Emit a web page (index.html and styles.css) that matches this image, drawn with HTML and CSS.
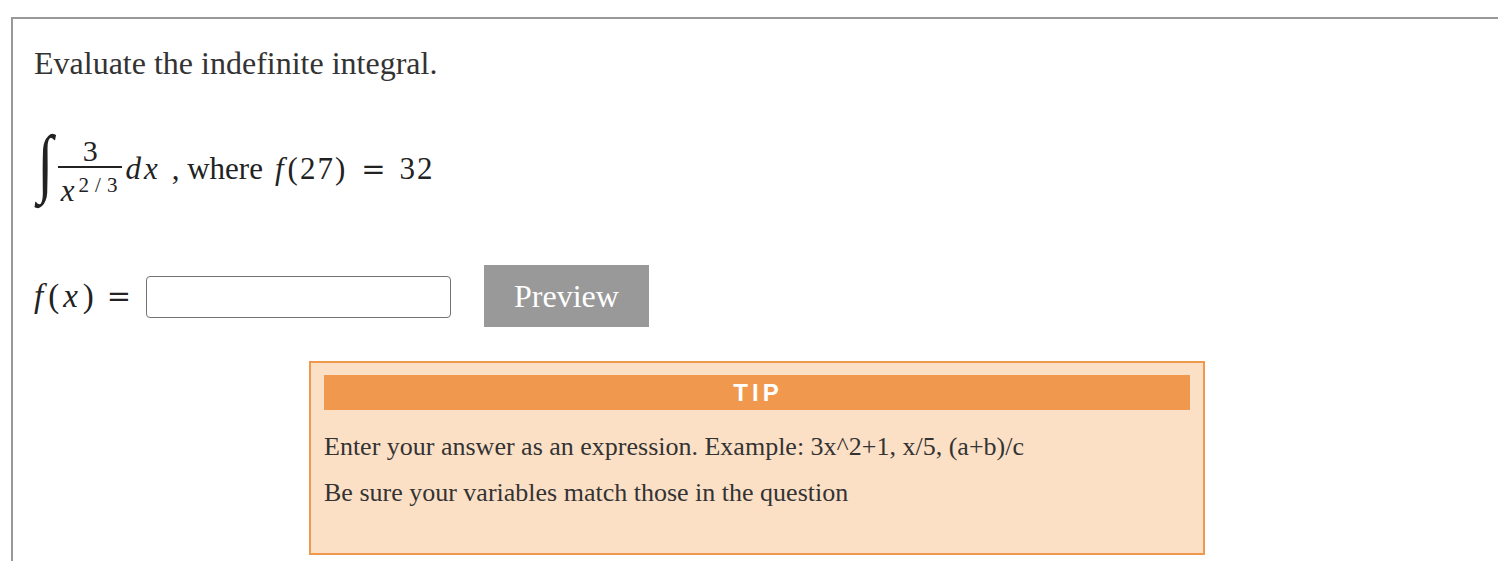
FILE: index.html
```html
<!DOCTYPE html>
<html>
<head>
<meta charset="utf-8">
<link rel="stylesheet" href="styles.css">
</head>
<body>
<div class="card">
  <p class="prompt">Evaluate the indefinite integral.</p>
  <div class="math-line">
    <span class="int">∫</span>
    <span class="frac">
      <span class="num">3</span>
      <span class="den"><i class="dvar">x</i><span class="sup">2<span class="sl">/</span>3</span></span>
    </span>
    <span class="mi dx">dx</span>
    <span class="txt">, where</span>
    <span class="mi f">f</span><span class="mn">(27)</span>
    <span class="mo">=</span>
    <span class="mn">32</span>
  </div>
  <div class="answer-row">
    <span class="lhs"><i class="mf">f</i><span class="mp">(</span><i class="mx">x</i><span class="mp">)</span><span class="mo eq">=</span></span>
    <input class="answer" type="text">
    <button class="preview">Preview</button>
  </div>
  <div class="tip">
    <div class="tip-head">TIP</div>
    <p class="tip-line first">Enter your answer as an expression. Example: 3x^2+1, x/5, (a+b)/c</p>
    <p class="tip-line">Be sure your variables match those in the question</p>
  </div>
</div>
</body>
</html>
```

FILE: styles.css
```css
html, body {
  margin: 0;
  padding: 0;
  background: #fff;
  overflow: hidden;
}
body {
  font-family: "Liberation Serif", "Times New Roman", serif;
  color: #333;
}
.card {
  margin: 17px 0 0 11px;
  border-top: 2px solid #999;
  border-left: 2px solid #999;
  padding: 26px 0 0 21px;
  height: 620px;
}
.prompt {
  margin: 0;
  font-size: 32px;
  line-height: 36px;
}
.math-line {
  display: flex;
  align-items: center;
  height: 72px;
  margin-top: 52px;
  font-size: 31px;
  color: #222;
}
.int {
  font-family: "Liberation Serif", serif;
  font-size: 76px;
  line-height: 72px;
  font-style: italic;
  transform: translateY(-7px) scaleX(0.75);
  margin-left: 1px;
}
.frac {
  display: inline-flex;
  flex-direction: column;
  align-items: center;
  margin: 0 3px 0 2px;
  transform: translateY(2px);
}
.num {
  font-size: 30px;
  line-height: 29px;
  padding: 0 5px 1px;
  border-bottom: 2px solid #222;
  align-self: stretch;
  text-align: center;
}
.den {
  font-size: 31px;
  line-height: 32px;
  padding: 1px 5px 0 3px;
}
.dvar {
  font-family: "Liberation Serif", serif;
  font-style: italic;
  margin-right: 2px;
}
.sup {
  font-size: 21px;
  vertical-align: 9px;
  margin-left: 2px;
}
.sl {
  margin: 0 6px;
}
.mi {
  font-family: "Liberation Serif", serif;
  font-style: italic;
  letter-spacing: 2px;
}
.mn {
  font-family: "Liberation Serif", serif;
  letter-spacing: 2px;
}
.f {
  margin-right: 2px;
}
.dx {
  letter-spacing: 3px;
  margin-right: 11px;
}
.txt {
  margin-right: 12px;
}
.mo {
  font-family: "DejaVu Serif", serif;
  font-size: 29px;
  margin: 0 14px 0 14px;
}
.answer-row {
  display: flex;
  align-items: center;
  margin-top: 60px;
  height: 62px;
}
.lhs {
  display: flex;
  align-items: center;
  font-size: 33px;
  width: 112px;
  color: #222;
}
.mf {
  font-family: "Liberation Serif", serif;
  margin-right: 5px;
}
.mx {
  font-family: "Liberation Serif", serif;
  margin: 0 5px 0 4px;
}
.eq {
  margin: 0 0 0 13px;
}
.answer {
  box-sizing: border-box;
  width: 305px;
  height: 42px;
  border: 1px solid #737373;
  border-radius: 4px;
  margin: 2px 0 0;
  padding: 0;
  background: #fff;
}
.preview {
  margin-left: 33px;
  width: 165px;
  height: 62px;
  border: none;
  background: #999;
  color: #fff;
  font-family: "Liberation Serif", "Times New Roman", serif;
  font-size: 32px;
  padding: 0;
}
.tip {
  box-sizing: border-box;
  margin: 34px 0 0 275px;
  width: 896px;
  height: 194px;
  border: 2px solid #f0994e;
  background: #fce0c6;
  padding: 12px 13px;
}
.tip-head {
  height: 35px;
  line-height: 35px;
  background: #f0994e;
  color: #fff;
  text-align: center;
  font-family: "Liberation Sans", Arial, sans-serif;
  font-weight: bold;
  font-size: 24px;
  letter-spacing: 4px;
  padding-left: 2px;
}
.tip-line {
  margin: 16px 0 0;
  font-size: 26px;
  line-height: 30px;
}
.tip-line.first {
  margin-top: 22px;
}
```
